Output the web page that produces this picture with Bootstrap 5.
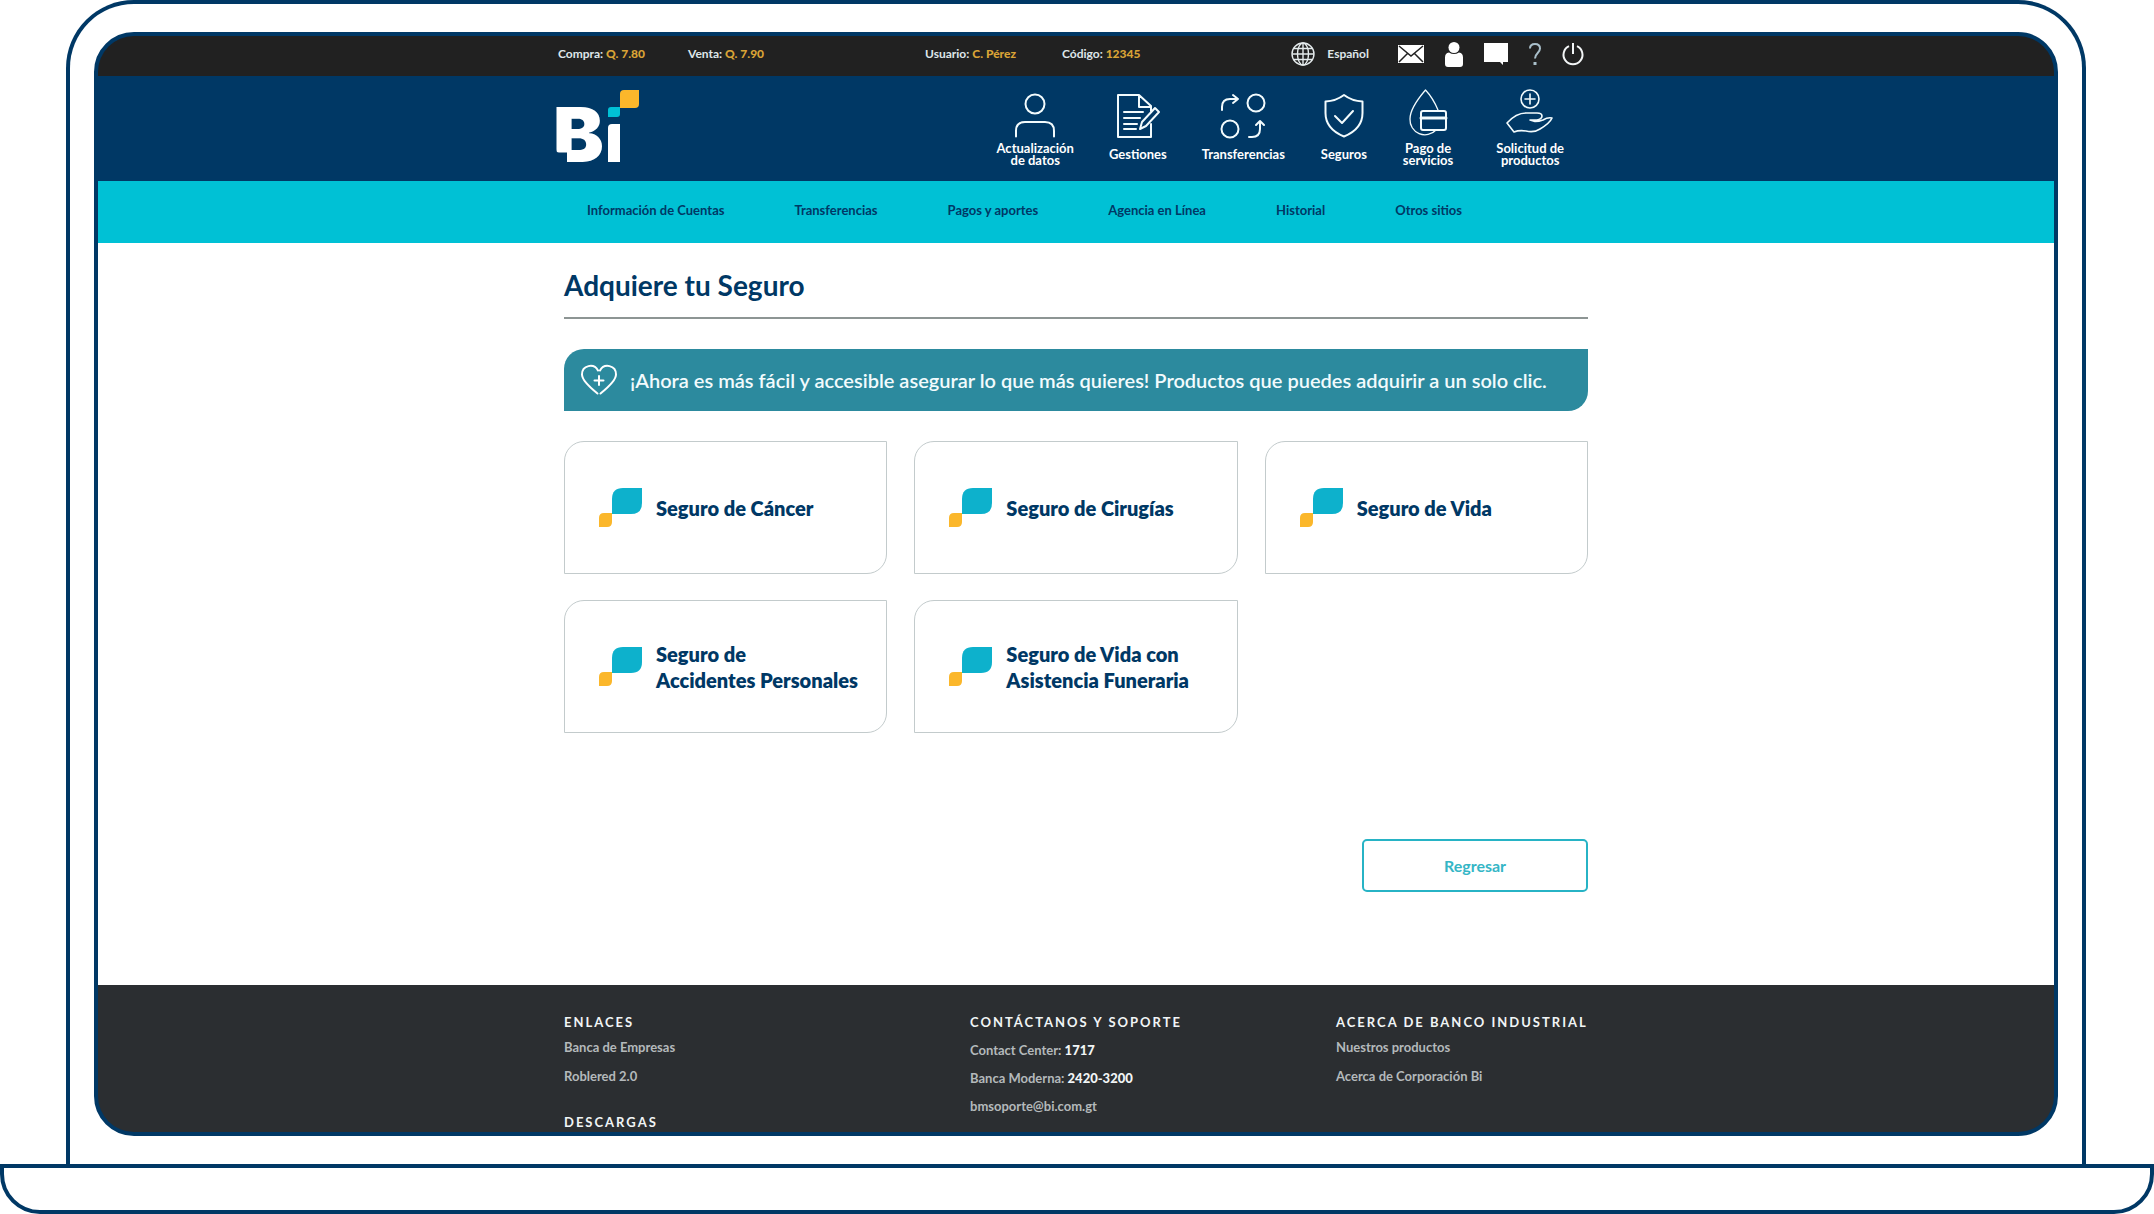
<!DOCTYPE html>
<html lang="es">
<head>
<meta charset="utf-8">
<meta name="viewport" content="width=device-width, initial-scale=1">
<title>Bi en Línea – Adquiere tu Seguro</title>
<link href="https://cdn.jsdelivr.net/npm/bootstrap@5.3.0/dist/css/bootstrap.min.css" rel="stylesheet">
<style>
  :root { --navy: #003865; --cyan: #00c1d5; }
  body { font-family: Lato, "Open Sans", sans-serif; color: var(--navy); background: #fff; }
  a { color: inherit; text-decoration: none; }
  svg { display: block; flex: none; overflow: visible; }

  /* laptop */
  .lid { margin: 0 68px 0 66px; padding: 28px 24px; border: 4px solid var(--navy); border-bottom: 0; border-radius: 68px 68px 0 0; }
  .screen { border: 4px solid var(--navy); border-radius: 40px; overflow: hidden; background: var(--navy); }
  .base { height: 50px; border: 4px solid var(--navy); border-radius: 0 0 40px 40px; }

  .wide-wrap { max-width: 1042px; margin: 0 auto; }
  .page-wrap { max-width: 1024px; margin: 0 auto; }

  /* utility bar */
  .util-bar { background: #212121; color: #dfe6ea; font-size: 12px; line-height: 16px; font-weight: 700; }
  .util-bar .wide-wrap { height: 40px; padding: 0 13px 4px 3px; }
  .util-bar b { color: #d9a336; }
  .rates { gap: 43px; }
  .session-info { margin-left: 161px; gap: 46px; }
  .util-tools { gap: 21px; }

  /* brand bar */
  .brand-bar { background: var(--navy); color: #fff; }
  .brand-bar .wide-wrap { height: 105px; padding-right: 33px; }
  .brand { padding-top: 14px; margin-left: -6px; }
  .quick-nav { gap: 35px; padding-top: 13px; }
  .quick-nav a { font-size: 13px; line-height: 12px; font-weight: 700; text-align: center; }
  .quick-label { height: 30px; padding-top: 3px; }
  .line-icon { fill: none; stroke: #f2fbfd; stroke-width: 2; stroke-linecap: round; stroke-linejoin: round; }

  /* section tabs */
  .tab-bar { background: var(--cyan); font-size: 13px; line-height: 16px; font-weight: 700; }
  .tab-bar .page-wrap { gap: 70px; padding: 21px 23px 25px; }

  /* content */
  .page-title { font-size: 28px; line-height: 34px; font-weight: 700; margin: 0; padding: 25px 0 15px; border-bottom: 2px solid #8d9594; }
  .promo { margin-top: 30px; min-height: 62px; padding-left: 17px; gap: 13px; background: #2c8a9e; color: #f2fbfd; font-size: 20px; line-height: 26px; font-weight: 600; border-radius: 20px 0; }
  .plans { display: grid; grid-template-columns: repeat(3, 1fr); gap: 26px 27px; margin-top: 30px; }
  .plan { min-height: 133px; padding-left: 34px; gap: 14px; border: 1px solid #c3cbcc; border-radius: 20px 0; font-size: 20px; line-height: 26px; font-weight: 800; }
  .actions { padding: 106px 0 93px; }
  .btn-back { width: 226px; height: 53px; border: 2px solid #27b3c5; border-radius: 5px; color: #35b6c6; font-size: 16px; font-weight: 700; }

  /* footer */
  .site-footer { background: #2b2e31; color: #b4b9bb; font-size: 13px; line-height: 16px; font-weight: 700; height: 147px; }
  .site-footer .page-wrap { display: grid; grid-template-columns: 406px 366px 1fr; padding-top: 29px; }
  .site-footer h2 { font-size: 13px; line-height: 16px; font-weight: 700; letter-spacing: 2px; color: #f1f5f6; margin: 0; white-space: nowrap; }
  .site-footer ul { list-style: none; padding: 0; margin: 9px 0 0; display: grid; gap: 13px; }
  .site-footer .contact-list { margin-top: 12px; gap: 12px; }
  .site-footer strong { color: #f1f5f6; }
  .downloads-title { padding-top: 30px; }
</style>
</head>
<body>
<div class="lid">
  <div class="screen">

    <div class="util-bar">
      <div class="wide-wrap d-flex align-items-center">
        <div class="rates d-flex"><span>Compra: <b>Q. 7.80</b></span><span>Venta: <b>Q. 7.90</b></span></div>
        <div class="session-info d-flex"><span>Usuario: <b>C. Pérez</b></span><span>Código: <b>12345</b></span></div>
        <div class="util-tools d-flex align-items-center ms-auto">
          <a href="#" class="d-flex align-items-center gap-2 me-2">
            <svg class="me-1" width="24" height="24" viewBox="0 0 24 24" fill="none" stroke="#e4eaec" stroke-width="1.4"><circle cx="12" cy="12" r="11"/><ellipse cx="12" cy="12" rx="5.5" ry="11"/><path d="M12 1v22M1 12h22M3 6.5h18M3 17.5h18"/></svg>
            <span>Español</span>
          </a>
          <a href="#" aria-label="Mensajes"><svg width="26" height="18" viewBox="0 0 26 18"><path fill="#fff" d="M0 0h26v18H0z"/><path d="M1 1l12 10L25 1M1 17l8.500-8.500M25 17l-8.500-8.500" fill="none" stroke="#212121" stroke-width="1.500"/></svg></a>
          <a href="#" aria-label="Perfil"><svg width="18" height="25" viewBox="0 0 18 25" fill="#fff"><circle cx="9" cy="5.500" r="5.500"/><path d="M4 10.500q5 3 10 0 4 .500 4 5V22q0 3-3 3H3q-3 0-3-3v-6.500q0-4.500 4-5z"/></svg></a>
          <a href="#" aria-label="Chat"><svg width="24" height="22" viewBox="0 0 24 22" fill="#fff"><path d="M0 0h24v19h-5v3l-3-3H0z"/></svg></a>
          <a href="#" aria-label="Ayuda"><svg width="12" height="23" viewBox="0 0 12 23" fill="none" stroke="#a9bfca" stroke-width="2"><path d="M1 5.500C1 2.500 3 1 6 1s5 1.800 5 4.500C11 10 6 10 6 15.500"/><path d="M4.500 20.500h3" stroke-width="3"/></svg></a>
          <a href="#" aria-label="Salir"><svg width="22" height="23" viewBox="0 0 22 23" fill="none" stroke="#f2f5f6" stroke-width="2"><path d="M7 3.200a9.500 9.500 0 1 0 8 0M11 0v11"/></svg></a>
        </div>
      </div>
    </div>

    <header class="brand-bar">
      <div class="wide-wrap d-flex justify-content-between align-items-start">
        <a href="#" class="brand" aria-label="Bi">
          <svg width="92" height="74" viewBox="-6 0 92 74">
            <text x="-2" y="72" fill="#fff" font-family="Inter, Lato, sans-serif" font-weight="900" font-size="76">B</text>
            <path d="M-2 58v15h14V62.500H4Q1 62.500 1 59z" fill="#003865"/>
            <path d="M57 34h8v38H53V38q0-4 4-4z" fill="#fff"/>
            <path d="M56 17h9v7q0 3-3 3h-9v-7q0-3 3-3z" fill="#00c1d5"/>
            <path d="M69 0h15v14q0 4-4 4H65V4q0-4 4-4z" fill="#fbb72b"/>
          </svg>
        </a>
        <nav class="quick-nav d-flex" aria-label="Accesos rápidos">
          <a href="#">
            <svg class="line-icon mx-auto" width="48" height="48" viewBox="0 0 48 48"><circle cx="24" cy="15" r="9.500"/><path d="M5 47.500V42q0-9 9-9h20q9 0 9 9v5.500"/></svg>
            <div class="quick-label d-flex align-items-center justify-content-center">Actualización<br>de datos</div>
          </a>
          <a href="#">
            <svg class="line-icon mx-auto" width="48" height="48" viewBox="0 0 48 48"><path d="M37 35v13H4V6h21l12 11v5M25 6v12h12M10 23h19M10 29h16M10 35h13M10 40h12"/><path d="M26 40l2-7 13-14 4 4-13 14-6 3z"/></svg>
            <div class="quick-label d-flex align-items-center justify-content-center">Gestiones</div>
          </a>
          <a href="#">
            <svg class="line-icon mx-auto" width="48" height="48" viewBox="0 0 48 48"><circle cx="37" cy="14" r="8.500"/><circle cx="11" cy="40" r="8.500"/><path d="M3 21v-3q0-8 8-8h8M14 6l5 4-5 4M30 48h3q8 0 8-8v-8M37 36l4-4 4 4"/></svg>
            <div class="quick-label d-flex align-items-center justify-content-center">Transferencias</div>
          </a>
          <a href="#">
            <svg class="line-icon mx-auto" width="48" height="48" viewBox="0 0 48 48"><path d="M24 6q8 6 18.500 6.500V24q0 16-18.500 23.500Q5.500 40 5.500 24V12.500Q16 12 24 6zM15 27l7 7 11-12"/></svg>
            <div class="quick-label d-flex align-items-center justify-content-center">Seguros</div>
          </a>
          <a href="#">
            <svg class="line-icon mx-auto" width="48" height="48" viewBox="0 0 48 48"><path stroke-width="1.300" d="M34 21Q29 9 21.500 1 6 19 6 30a15 15 0 0 0 26 11"/><rect x="17" y="22" width="25" height="19" rx="2"/><path d="M17 29h25" stroke-width="3"/></svg>
            <div class="quick-label d-flex align-items-center justify-content-center">Pago de<br>servicios</div>
          </a>
          <a href="#" class="ms-2">
            <svg class="line-icon mx-auto" width="48" height="48" viewBox="0 0 48 48"><g stroke-width="1.600"><circle cx="24" cy="10" r="9"/><path d="M24 5v10M19 10h10M8 43l-7-9q9-10 19-10h11q5 0 5 3t-5 4h-7l5 1.500q4 0 8-1.500 5-3 9-2-2 5-12 11-6 4-14 2-7-1-12 1z"/></g></svg>
            <div class="quick-label d-flex align-items-center justify-content-center">Solicitud de<br>productos</div>
          </a>
        </nav>
      </div>
    </header>

    <nav class="tab-bar" aria-label="Secciones">
      <div class="page-wrap d-flex">
        <a href="#">Información de Cuentas</a><a href="#">Transferencias</a><a href="#">Pagos y aportes</a><a href="#">Agencia en Línea</a><a href="#">Historial</a><a href="#">Otros sitios</a>
      </div>
    </nav>

    <main class="bg-white">
      <div class="page-wrap">
        <h1 class="page-title">Adquiere tu Seguro</h1>
        <div class="promo d-flex align-items-center">
          <svg width="36" height="30" viewBox="0 0 36 30" fill="none" stroke="#fff" stroke-width="2" stroke-linecap="round"><path d="M16.500 28.500Q1 16 1 9.500C1 0 13-2 17 5.500M19.500 28.500Q35 16 35 9.500C35 0 23-2 19 5.500M18 11v9M13.500 15.500h9"/></svg>
          <span>¡Ahora es más fácil y accesible asegurar lo que más quieres! Productos que puedes adquirir a un solo clic.</span>
        </div>

        <svg width="0" height="0" class="d-none"><symbol id="leaf" viewBox="0 0 43 39"><path d="M24 0h19v15q0 11-11 11H13V11Q13 0 24 0z" fill="#0db1cc"/><path d="M5 25h8v9q0 5-5 5H0v-9q0-5 5-5z" fill="#fbb72b"/></symbol></svg>
        <div class="plans">
          <a href="#" class="plan d-flex align-items-center"><svg width="43" height="39"><use href="#leaf"/></svg><span>Seguro de Cáncer</span></a>
          <a href="#" class="plan d-flex align-items-center"><svg width="43" height="39"><use href="#leaf"/></svg><span>Seguro de Cirugías</span></a>
          <a href="#" class="plan d-flex align-items-center"><svg width="43" height="39"><use href="#leaf"/></svg><span>Seguro de Vida</span></a>
          <a href="#" class="plan d-flex align-items-center"><svg width="43" height="39"><use href="#leaf"/></svg><span>Seguro de<br>Accidentes Personales</span></a>
          <a href="#" class="plan d-flex align-items-center"><svg width="43" height="39"><use href="#leaf"/></svg><span>Seguro de Vida con<br>Asistencia Funeraria</span></a>
        </div>
        <div class="actions d-flex justify-content-end">
          <button type="button" class="btn btn-back">Regresar</button>
        </div>
      </div>
    </main>

    <footer class="site-footer">
      <div class="page-wrap">
        <div>
          <h2>ENLACES</h2>
          <ul><li><a href="#">Banca de Empresas</a></li><li><a href="#">Roblered 2.0</a></li></ul>
          <h2 class="downloads-title">DESCARGAS</h2>
        </div>
        <div>
          <h2>CONTÁCTANOS Y SOPORTE</h2>
          <ul class="contact-list"><li>Contact Center: <strong>1717</strong></li><li>Banca Moderna: <strong>2420-3200</strong></li><li><a href="#">bmsoporte@bi.com.gt</a></li></ul>
        </div>
        <div>
          <h2>ACERCA DE BANCO INDUSTRIAL</h2>
          <ul><li><a href="#">Nuestros productos</a></li><li><a href="#">Acerca de Corporación Bi</a></li></ul>
        </div>
      </div>
    </footer>
  </div>
</div>
<div class="base"></div>
<script src="https://cdn.jsdelivr.net/npm/bootstrap@5.3.0/dist/js/bootstrap.bundle.min.js"></script>
</body>
</html>
